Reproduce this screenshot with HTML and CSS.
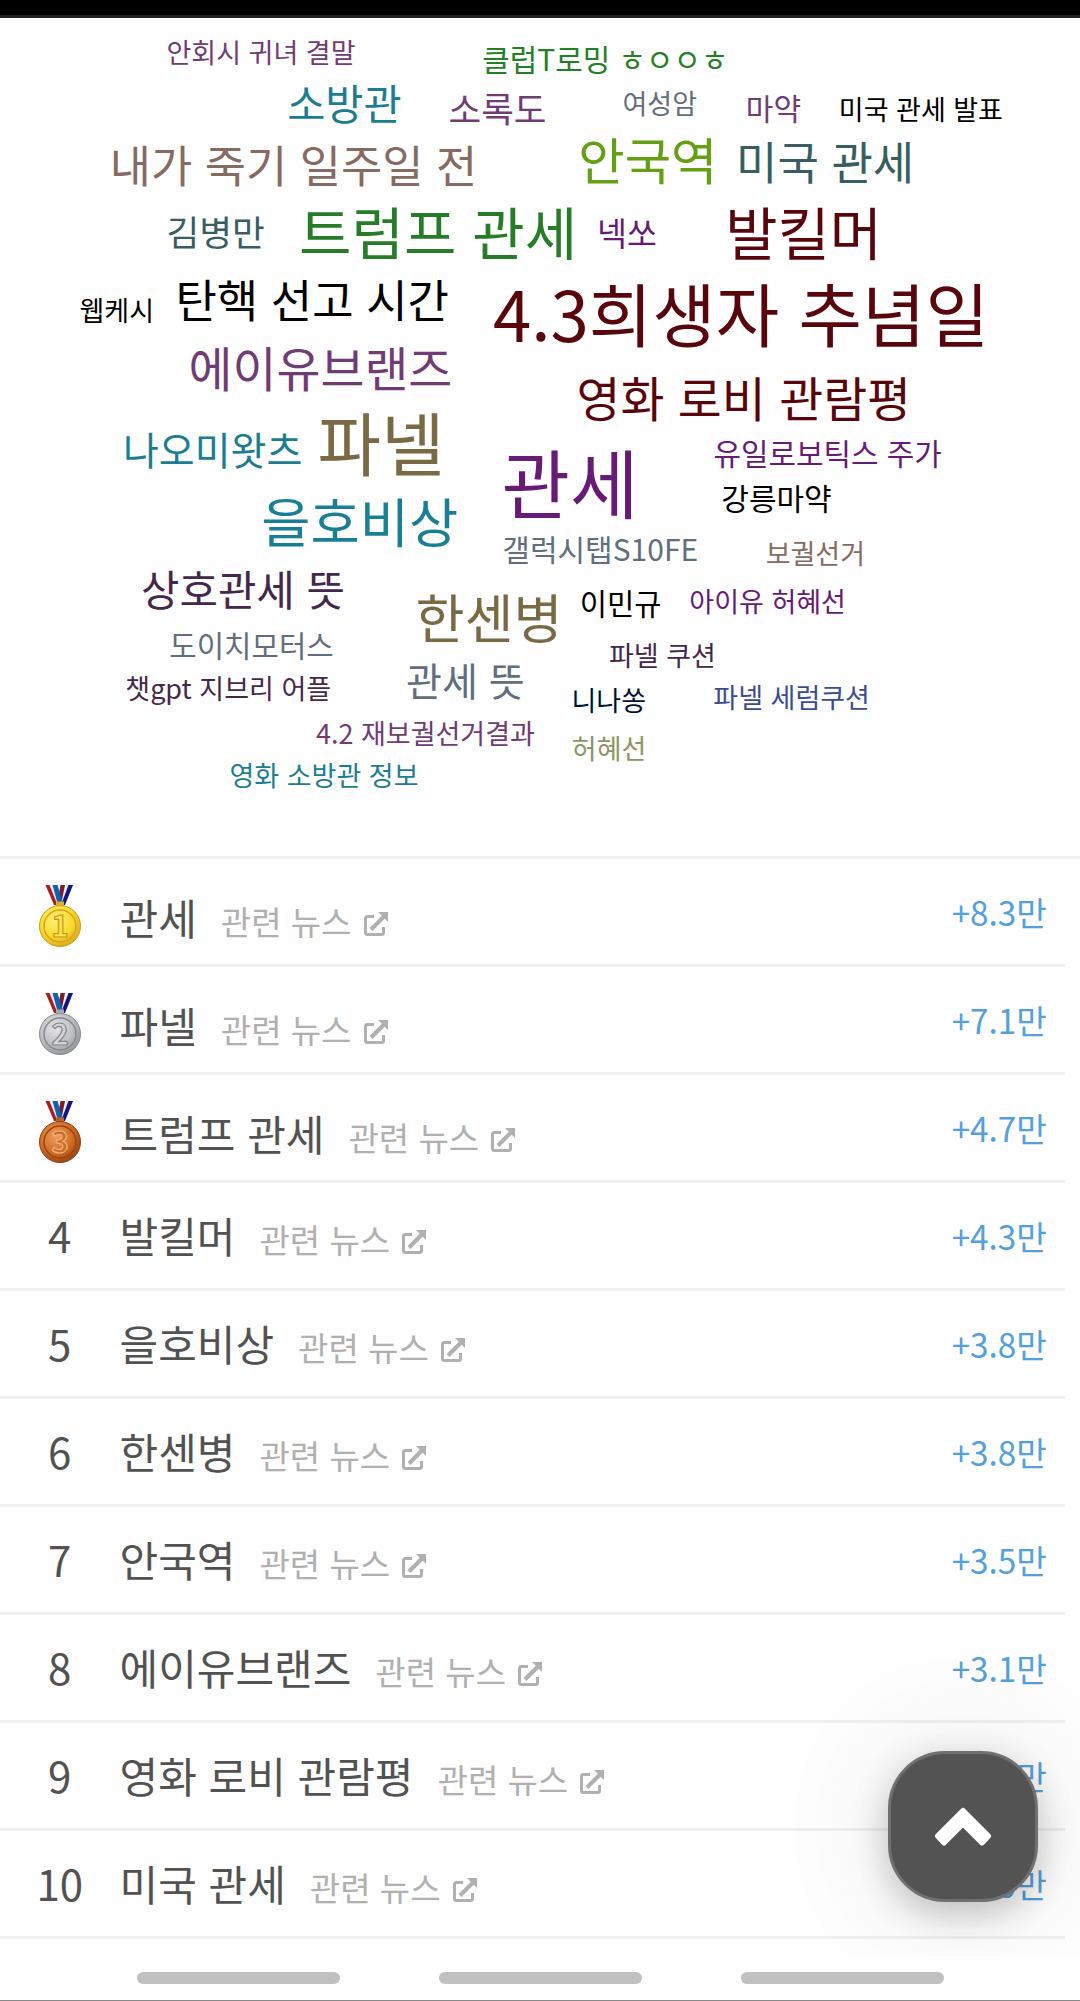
FILE: index.html
```html
<!DOCTYPE html>
<html lang="ko">
<head>
<meta charset="UTF-8">
<meta name="viewport" content="width=device-width, initial-scale=1.0">
<title>실시간 검색어</title>
<link rel="stylesheet" href="styles.css">
</head>
<body>

<!-- Shared icons -->
<svg class="defs" width="0" height="0">
  <defs>
    <radialGradient id="gold" cx="40%" cy="35%" r="70%">
      <stop offset="0" stop-color="#fff07a"/><stop offset="0.6" stop-color="#f8d92f"/><stop offset="1" stop-color="#dda316"/>
    </radialGradient>
    <radialGradient id="silver" cx="40%" cy="35%" r="70%">
      <stop offset="0" stop-color="#e6e6e8"/><stop offset="0.6" stop-color="#bdbec1"/><stop offset="1" stop-color="#8f9194"/>
    </radialGradient>
    <radialGradient id="bronze" cx="40%" cy="35%" r="70%">
      <stop offset="0" stop-color="#f0a05a"/><stop offset="0.6" stop-color="#cf6a25"/><stop offset="1" stop-color="#93400f"/>
    </radialGradient>
    <symbol id="ribbon" viewBox="0 0 42 66">
      <path d="M10 0h4.500l6 20h-4z" fill="#eef0f6"/>
      <path d="M6.500 0h4l8 20h-3.500z" fill="#a81e22"/>
      <path d="M25.500 0h4.500L23 20h-3z" fill="#f1eef3"/>
      <path d="M29.500 0H34L26 20h-4z" fill="#10157f"/>
      <path d="M21.500 0H26l-4 20h-4z" fill="#7d1a2c"/>
      <path d="M13.500 0h5l4.500 14-2 6h-2z" fill="#1261ab"/>
    </symbol>
    <symbol id="external" viewBox="0 0 24 24">
      <path d="M10 4.500H3.500Q1.500 4.500 1.500 6.500V20.500Q1.500 22.500 3.500 22.500H17.500Q19.500 22.500 19.500 20.500V15" fill="none" stroke="#b0b0b0" stroke-width="3"/>
      <path d="M7 17.500L20 4.500" stroke="#b0b0b0" stroke-width="4"/>
      <path d="M14 0h10v10z" fill="#b0b0b0"/>
    </symbol>
  </defs>
</svg>

<div class="status-bar"></div>

<div class="page">
  <!-- Word cloud -->
  <svg class="cloud" viewBox="0 18 1080 838" width="1080" height="838">
    <text x="166.500" y="62.900" font-size="27" fill="#713b73">안회시 귀녀 결말</text>
    <text x="482.300" y="71.200" font-size="29.900" fill="#257f27">클럽T로밍 ㅎㅇㅇㅎ</text>
    <text x="287.200" y="119.800" font-size="41.500" fill="#1d7d90">소방관</text>
    <text x="448.500" y="122.500" font-size="35.500" fill="#713b73">소록도</text>
    <text x="622.500" y="113.900" font-size="27" fill="#616e7d">여성암</text>
    <text x="745.800" y="119.700" font-size="30" fill="#713b73">마약</text>
    <text x="838.800" y="119.900" font-size="27" fill="#000">미국 관세 발표</text>
    <text x="109.800" y="183.100" font-size="44.800" fill="#876a62">내가 죽기 일주일 전</text>
    <text x="578.300" y="180" font-size="50.400" fill="#659f13">안국역</text>
    <text x="736" y="180.100" font-size="45" fill="#385e62">미국 관세</text>
    <text x="166.400" y="245.700" font-size="35.700" fill="#385e62">김병만</text>
    <text x="299" y="254.600" font-size="57" fill="#267c28">트럼프 관세</text>
    <text x="597" y="245.800" font-size="32.500" fill="#661b74">넥쏘</text>
    <text x="725.300" y="254.800" font-size="56.800" fill="#58060c">발킬머</text>
    <text x="79.500" y="320.900" font-size="27" fill="#000">웹케시</text>
    <text x="175.400" y="317.800" font-size="45" fill="#000">탄핵 선고 시간</text>
    <text x="493" y="341.900" font-size="69" fill="#58060c">4.3희생자 추념일</text>
    <text x="188.500" y="387" font-size="47.800" fill="#713b73">에이유브랜즈</text>
    <text x="576.500" y="417" font-size="47.800" fill="#58060c">영화 로비 관람평</text>
    <text x="122.900" y="465" font-size="39" fill="#1d7d90">나오미왓츠</text>
    <text x="317.500" y="471.300" font-size="69" fill="#796944">파넬</text>
    <text x="261.300" y="542.800" font-size="53.500" fill="#1a7f94">을호비상</text>
    <text x="501.500" y="512.900" font-size="74.500" fill="#661b74">관세</text>
    <text x="713.500" y="465" font-size="29.900" fill="#661b74">유일로보틱스 주가</text>
    <text x="721.300" y="510" font-size="30" fill="#000">강릉마약</text>
    <text x="502.300" y="560.700" font-size="30" fill="#616e7d">갤럭시탭S10FE</text>
    <text x="765.700" y="563.500" font-size="27" fill="#876a62">보궐선거</text>
    <text x="141" y="605.600" font-size="41.800" fill="#45274b">상호관세 뜻</text>
    <text x="415.500" y="638.600" font-size="53.300" fill="#796944">한센병</text>
    <text x="579.700" y="614.700" font-size="29.700" fill="#000">이민규</text>
    <text x="689.300" y="612" font-size="27" fill="#661b74">아이유 허혜선</text>
    <text x="169.300" y="656.500" font-size="29.800" fill="#616e7d">도이치모터스</text>
    <text x="406" y="696" font-size="39" fill="#616e7d">관세 뜻</text>
    <text x="609" y="666" font-size="27" fill="#45274b">파넬 쿠션</text>
    <text x="125.300" y="699.200" font-size="27" fill="#45274b">챗gpt 지브리 어플</text>
    <text x="571.500" y="711" font-size="27" fill="#001233">니나쏭</text>
    <text x="713.300" y="708" font-size="27" fill="#3b4d8e">파넬 세럼쿠션</text>
    <text x="315.900" y="744" font-size="27" fill="#713b73">4.2 재보궐선거결과</text>
    <text x="571.800" y="759" font-size="27" fill="#8b9663">허혜선</text>
    <text x="229.500" y="786" font-size="27" fill="#1d7d90">영화 소방관 정보</text>
  </svg>

  <!-- Ranking -->
  <ol class="rank-list">
    <li class="rank-item top">
      <span class="rank"><svg class="medal" viewBox="0 2.500 42 63"><use href="#ribbon" y="2.500" width="42" height="66"/><path d="M17 19h8v5h-8z" fill="#d9b030"/><circle cx="21" cy="43.500" r="20.500" fill="url(#gold)" stroke="#cf9d1c"/><circle cx="21" cy="43.500" r="16" fill="none" stroke="#d6a51c" stroke-width="1.500"/><text x="21" y="54.500" fill="#fbe44c" stroke="#c9951c">1</text></svg></span>
      <span class="keyword">관세</span>
      <a class="news">관련 뉴스 <svg class="ext"><use href="#external"/></svg></a>
      <span class="count">+8.3만</span>
    </li>
    <li class="rank-item top">
      <span class="rank"><svg class="medal" viewBox="0 2.500 42 63"><use href="#ribbon" y="2.500" width="42" height="66"/><path d="M17 19h8v5h-8z" fill="#aaa"/><circle cx="21" cy="43.500" r="20.500" fill="url(#silver)" stroke="#8b8d90"/><circle cx="21" cy="43.500" r="16" fill="none" stroke="#88898c" stroke-width="1.500"/><text x="21" y="54.500" fill="#d4d5d7" stroke="#85878a">2</text></svg></span>
      <span class="keyword">파넬</span>
      <a class="news">관련 뉴스 <svg class="ext"><use href="#external"/></svg></a>
      <span class="count">+7.1만</span>
    </li>
    <li class="rank-item top">
      <span class="rank"><svg class="medal" viewBox="0 2.500 42 63"><use href="#ribbon" y="2.500" width="42" height="66"/><path d="M17 19h8v5h-8z" fill="#b5652c"/><circle cx="21" cy="43.500" r="20.500" fill="url(#bronze)" stroke="#8f4315"/><circle cx="21" cy="43.500" r="16" fill="none" stroke="#994612" stroke-width="1.500"/><text x="21" y="54.500" fill="#cb6c2b" stroke="#f0b07c">3</text></svg></span>
      <span class="keyword">트럼프 관세</span>
      <a class="news">관련 뉴스 <svg class="ext"><use href="#external"/></svg></a>
      <span class="count">+4.7만</span>
    </li>
    <li class="rank-item">
      <span class="rank">4</span>
      <span class="keyword">발킬머</span>
      <a class="news">관련 뉴스 <svg class="ext"><use href="#external"/></svg></a>
      <span class="count">+4.3만</span>
    </li>
    <li class="rank-item">
      <span class="rank">5</span>
      <span class="keyword">을호비상</span>
      <a class="news">관련 뉴스 <svg class="ext"><use href="#external"/></svg></a>
      <span class="count">+3.8만</span>
    </li>
    <li class="rank-item">
      <span class="rank">6</span>
      <span class="keyword">한센병</span>
      <a class="news">관련 뉴스 <svg class="ext"><use href="#external"/></svg></a>
      <span class="count">+3.8만</span>
    </li>
    <li class="rank-item">
      <span class="rank">7</span>
      <span class="keyword">안국역</span>
      <a class="news">관련 뉴스 <svg class="ext"><use href="#external"/></svg></a>
      <span class="count">+3.5만</span>
    </li>
    <li class="rank-item">
      <span class="rank">8</span>
      <span class="keyword">에이유브랜즈</span>
      <a class="news">관련 뉴스 <svg class="ext"><use href="#external"/></svg></a>
      <span class="count">+3.1만</span>
    </li>
    <li class="rank-item">
      <span class="rank">9</span>
      <span class="keyword">영화 로비 관람평</span>
      <a class="news">관련 뉴스 <svg class="ext"><use href="#external"/></svg></a>
      <span class="count">+3.0만</span>
    </li>
    <li class="rank-item">
      <span class="rank">10</span>
      <span class="keyword">미국 관세</span>
      <a class="news">관련 뉴스 <svg class="ext"><use href="#external"/></svg></a>
      <span class="count">+3.0만</span>
    </li>
  </ol>

  <button class="to-top" aria-label="맨 위로">
    <svg width="58" height="40" viewBox="0 0 58 40"><path d="M29 4L4 29L10 35.500L29 16.500L48 35.500L54 29Z" fill="#fff" stroke="#fff" stroke-width="6" stroke-linejoin="round"/></svg>
  </button>
</div>

<!-- Gesture hints -->
<div class="nav-bar">
  <span></span>
  <span></span>
  <span></span>
</div>

</body>
</html>
```
FILE: styles.css
```css
* {
  box-sizing: border-box;
}
body {
  margin: 0;
  background: #fefefe;
  color: #525252;
  font-family: "Noto Sans CJK KR", "Noto Sans", sans-serif;
}
.defs {
  position: absolute;
}
.status-bar {
  height: 18px;
  background: #000;
  border-bottom: 3px solid #222;
}
.page {
  position: relative;
  height: 1938px;
  overflow: hidden;
  background: #fefefe;
}
/* Word cloud */
.cloud {
  display: block;
}
/* Ranking */
.rank-list {
  margin: 0;
  padding: 0;
  list-style: none;
  border-top: 3px solid #f0f0f0;
}
.rank-item {
  display: flex;
  align-items: flex-start;
  width: 1065px;
  height: 108px;
  padding-right: 18px;
  border-bottom: 3px solid #f0f0f0;
  line-height: 60px;
  white-space: nowrap;
}
.rank {
  width: 119.500px;
  padding-top: 22px;
  text-align: center;
  font-size: 42px;
}
.medal {
  display: block;
  width: 42px;
  height: 63px;
  margin: 6px 0 0 39px;
}
.medal text {
  font-size: 29px;
  font-weight: bold;
  text-anchor: middle;
  stroke-width: 1.200px;
}
.keyword {
  padding-top: 22px;
  font-size: 42px;
}
.news {
  margin-left: 24px;
  padding-top: 25.500px;
  color: #b0b0b0;
  font-size: 33px;
}
.top .rank {
  padding-top: 20px;
}
.top .keyword {
  padding-top: 28px;
}
.top .news {
  padding-top: 31.500px;
}
.ext {
  width: 24px;
  height: 24px;
  margin-left: 3px;
  vertical-align: -1px;
}
.count {
  margin-left: auto;
  padding-top: 23px;
  color: #559fdb;
  font-size: 33.300px;
}
/* Scroll to top */
.to-top {
  position: absolute;
  left: 888px;
  top: 1733px;
  width: 150px;
  height: 151px;
  display: flex;
  align-items: center;
  justify-content: center;
  padding: 0;
  border: 3px solid #707070;
  border-radius: 57px;
  background: #535353;
  box-shadow: 0 12px 36px rgba(0, 0, 0, 0.22), 0 0 120px rgba(0, 0, 0, 0.1);
}
/* Bottom bar */
.nav-bar {
  display: flex;
  justify-content: center;
  gap: 99px;
  height: 45px;
  padding-top: 16px;
  border-bottom: 1px solid #888;
}
.nav-bar span {
  width: 203px;
  height: 12px;
  border-radius: 6px;
  background: #c0c0c0;
}
```
